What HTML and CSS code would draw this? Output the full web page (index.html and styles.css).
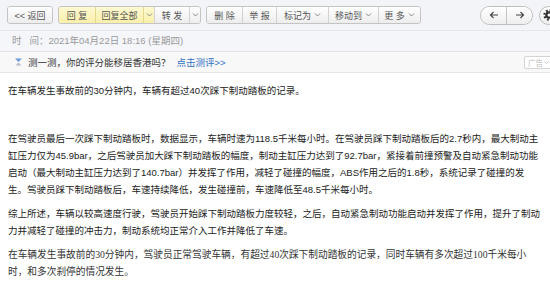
FILE: index.html
```html
<!DOCTYPE html>
<html lang="zh-CN">
<head>
    <meta charset="UTF-8">
    <meta name="viewport" content="width=device-width, initial-scale=1.0">
    <title>邮件阅读</title>
    <link rel="stylesheet" href="styles.css">
</head>
<body>

    <!-- 工具栏 -->
    <div class="toolbar">
        <div class="btn-group">
            <span class="btn back">&lt;&lt; 返回</span>
        </div>
        <div class="btn-group">
            <span class="btn yellow w-reply">回 复</span>
            <span class="btn yellow w-all">回复全部</span>
            <span class="btn yellow dd"><svg width="7" height="4" viewBox="0 0 7 4"><path d="M1 .5 3.5 3 6 .5" fill="none" stroke="#888"/></svg></span>
            <span class="btn w-fwd">转 发</span>
            <span class="btn dd"><svg width="7" height="4" viewBox="0 0 7 4"><path d="M1 .5 3.5 3 6 .5" fill="none" stroke="#888"/></svg></span>
        </div>
        <div class="btn-group">
            <span class="btn w-del">删 除</span>
            <span class="btn w-rep">举 报</span>
            <span class="btn w-mark">标记为 <svg width="7" height="4" viewBox="0 0 7 4"><path d="M1 .5 3.5 3 6 .5" fill="none" stroke="#888"/></svg></span>
            <span class="btn w-move">移动到 <svg width="7" height="4" viewBox="0 0 7 4"><path d="M1 .5 3.5 3 6 .5" fill="none" stroke="#888"/></svg></span>
            <span class="btn w-more">更 多 <svg width="7" height="4" viewBox="0 0 7 4"><path d="M1 .5 3.5 3 6 .5" fill="none" stroke="#888"/></svg></span>
        </div>
        <div class="nav">
            <span class="nav-btn"><svg width="10" height="8" viewBox="0 0 10 8"><path d="M9 4H1.5M4.5 1 1.5 4 4.5 7" fill="none" stroke="#444" stroke-width="1.1"/></svg></span>
            <span class="nav-btn"><svg width="10" height="8" viewBox="0 0 10 8"><path d="M1 4h7.5M5.5 1 8.5 4 5.5 7" fill="none" stroke="#444" stroke-width="1.1"/></svg></span>
        </div>
        <span class="gear">
            <svg width="12" height="12" viewBox="0 0 12 12">
                <circle cx="6" cy="6" r="4.6" fill="none" stroke="#333" stroke-width="2.2" stroke-dasharray="1.8 1.81"/>
                <circle cx="6" cy="6" r="3.8" fill="#333"/>
                <circle cx="6" cy="6" r="1.5" fill="#fff"/>
            </svg>
        </span>
    </div>

    <!-- 时间 -->
    <div class="time-row">时&nbsp;&nbsp;&nbsp;间：2021年04月22日 18:16 (星期四)</div>

    <!-- 广告 -->
    <div class="ad-row">
        <svg class="ad-icon" width="7" height="8" viewBox="0 0 7 8"><path d="M0 .5h7L3.5 4z" fill="#6a9be0"/><path d="M.5 7.5h6L3.5 4.5z" fill="#b4bcc8"/></svg>
        <span class="ad-text">测一测，你的评分能移居香港吗？</span>
        <a class="ad-link">点击测评&gt;&gt;</a>
        <span class="ad-tag">广告 <svg width="5" height="3" viewBox="0 0 5 3"><path d="M.5 .5 2.5 2.5 4.5 .5" fill="none" stroke="#bbb" stroke-width=".8"/></svg></span>
    </div>

    <!-- 正文 -->
    <div class="content">
        <p>在车辆发生事故前的30分钟内，车辆有超过40次踩下制动踏板的记录。</p>
        <p>&nbsp;</p>
        <p>在驾驶员最后一次踩下制动踏板时，数据显示，车辆时速为118.5千米每小时。在驾驶员踩下制动踏板后的2.7秒内，最大制动主缸压力仅为45.9bar，之后驾驶员加大踩下制动踏板的幅度，制动主缸压力达到了92.7bar，紧接着前撞预警及自动紧急制动功能启动（最大制动主缸压力达到了140.7bar）并发挥了作用，减轻了碰撞的幅度，ABS作用之后的1.8秒，系统记录了碰撞的发生。驾驶员踩下制动踏板后，车速持续降低，发生碰撞前，车速降低至48.5千米每小时。</p>
        <p>综上所述，车辆以较高速度行驶，驾驶员开始踩下制动踏板力度较轻，之后，自动紧急制动功能启动并发挥了作用，提升了制动力并减轻了碰撞的冲击力，制动系统均正常介入工作并降低了车速。</p>
        <p class="serif">在车辆发生事故前的30分钟内，驾驶员正常驾驶车辆，有超过40次踩下制动踏板的记录，同时车辆有多次超过100千米每小时，和多次刹停的情况发生。</p>
    </div>

</body>
</html>
```

FILE: styles.css
```css
body {
    margin: 0;
    width: 550px;
    overflow: hidden;
    font-family: "Liberation Sans", "Noto Sans CJK SC", sans-serif;
    background-color: white;
}
.toolbar {
    height: 30px;
    display: flex;
    align-items: center;
    padding-left: 7px;
    background-color: #f3f4f8;
    border-bottom: 1px solid #e6e7ec;
}
.btn-group {
    display: flex;
    height: 18px;
    border: 1px solid #c4c4c4;
    border-radius: 3px;
    overflow: hidden;
    margin-right: 5px;
    box-sizing: border-box;
    flex-shrink: 0;
}
.btn {
    display: flex;
    align-items: center;
    justify-content: center;
    gap: 3px;
    height: 100%;
    font-size: 9px;
    color: #555;
    background: linear-gradient(#ffffff, #ededed);
    border-left: 1px solid #d2d2d2;
    box-sizing: border-box;
}
.btn:first-child {
    border-left: none;
}
.btn.yellow {
    background: linear-gradient(#fdf9d2, #f9efaa);
    border-left-color: #e2d88e;
}
.btn.yellow + .btn:not(.yellow) {
    border-left-color: #d2d2d2;
}
.back { width: 44px; }
.w-reply { width: 36px; }
.w-all { width: 48px; }
.dd { width: 11px; }
.w-fwd { width: 35px; }
.w-del { width: 35px; }
.w-rep { width: 34px; }
.w-mark { width: 52px; }
.w-move { width: 50px; }
.w-more { width: 42px; }
.nav {
    display: flex;
    height: 19px;
    margin-left: 54px;
    border: 1px solid #bdbdbd;
    border-radius: 10px;
    overflow: hidden;
    box-sizing: border-box;
    flex-shrink: 0;
}
.nav-btn {
    width: 25px;
    display: flex;
    align-items: center;
    justify-content: center;
    background: linear-gradient(#ffffff, #eeeeee);
}
.nav-btn + .nav-btn {
    border-left: 1px solid #c4c4c4;
}
.gear {
    width: 19px;
    height: 19px;
    margin-left: 6px;
    flex-shrink: 0;
    border: 1px solid #bdbdbd;
    border-radius: 50%;
    display: flex;
    align-items: center;
    justify-content: center;
    box-sizing: border-box;
    background: linear-gradient(#ffffff, #eeeeee);
}
.time-row {
    height: 20px;
    line-height: 20px;
    padding-left: 12px;
    font-size: 9.5px;
    color: #9a9a9a;
    background-color: #f5f6fa;
    border-bottom: 1px solid #e2e3e6;
}
.ad-row {
    height: 20px;
    display: flex;
    align-items: center;
    padding-left: 15px;
    font-size: 9.5px;
    background-color: #f8f8f9;
    border-bottom: 1px solid #e6e6e6;
}
.ad-icon {
    margin-right: 6px;
}
.ad-text {
    color: #333;
}
.ad-link {
    color: #2f6fc6;
    margin-left: 6px;
}
.ad-tag {
    margin-left: auto;
    margin-right: -3px;
    height: 13px;
    padding: 0 3px;
    display: flex;
    align-items: center;
    gap: 1px;
    font-size: 7.5px;
    color: #bbb;
    border: 1px solid #d4d4d4;
    border-radius: 2px;
    box-sizing: border-box;
    background-color: white;
}
.content {
    padding: 9px 8px 0 8px;
    font-size: 9.5px;
    line-height: 17px;
    color: #222;
}
.content p {
    margin: 0 0 7px;
}
.content .serif {
    font-family: "Liberation Serif", "Noto Sans CJK SC", serif;
    font-size: 9.7px;
    color: #333;
}
```
